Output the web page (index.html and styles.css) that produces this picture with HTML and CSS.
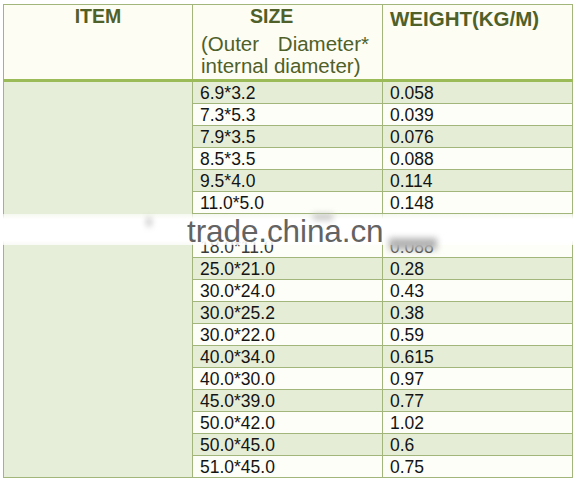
FILE: index.html
```html
<!DOCTYPE html>
<html>
<head>
<meta charset="utf-8">
<link rel="stylesheet" href="styles.css">
</head>
<body>
<div class="wrap">
<table class="spec">
  <colgroup>
    <col class="c1"><col class="c2"><col class="c3">
  </colgroup>
  <thead>
    <tr>
      <th class="h-item">ITEM</th>
      <th class="h-size"><div class="size-title">SIZE</div><div class="size-sub">(Outer Diameter* internal diameter)</div></th>
      <th class="h-weight">WEIGHT(KG/M)</th>
    </tr>
  </thead>
  <tbody>
    <tr class="g"><td class="item" rowspan="18"></td><td>6.9*3.2</td><td>0.058</td></tr>
    <tr class="w"><td>7.3*5.3</td><td>0.039</td></tr>
    <tr class="g"><td>7.9*3.5</td><td>0.076</td></tr>
    <tr class="w"><td>8.5*3.5</td><td>0.088</td></tr>
    <tr class="g"><td>9.5*4.0</td><td>0.114</td></tr>
    <tr class="w"><td>11.0*5.0</td><td>0.148</td></tr>
    <tr class="g"><td></td><td></td></tr>
    <tr class="w"><td class="cut">18.0*11.0</td><td class="cut">0.088</td></tr>
    <tr class="g"><td>25.0*21.0</td><td>0.28</td></tr>
    <tr class="w"><td>30.0*24.0</td><td>0.43</td></tr>
    <tr class="g"><td>30.0*25.2</td><td>0.38</td></tr>
    <tr class="w"><td>30.0*22.0</td><td>0.59</td></tr>
    <tr class="g"><td>40.0*34.0</td><td>0.615</td></tr>
    <tr class="w"><td>40.0*30.0</td><td>0.97</td></tr>
    <tr class="g"><td>45.0*39.0</td><td>0.77</td></tr>
    <tr class="w"><td>50.0*42.0</td><td>1.02</td></tr>
    <tr class="g"><td>50.0*45.0</td><td>0.6</td></tr>
    <tr class="w"><td>51.0*45.0</td><td>0.75</td></tr>
  </tbody>
</table>
<div class="watermark">
  <span class="blob b1"></span>
  <span class="blob b2"></span>
  <span class="wm-text">trade.china.cn</span>
</div>
<span class="blob b3"></span>
</div>
</body>
</html>
```
FILE: styles.css
```css
html, body {
  margin: 0;
  padding: 0;
  background: #ffffff;
}
body {
  padding: 4px 0 0 3px;
  font-family: "Liberation Sans", Arial, sans-serif;
}
.wrap {
  position: relative;
  width: 569px;
}
.spec {
  border-collapse: collapse;
  table-layout: fixed;
  width: 569px;
}
.c1 { width: 189px; }
.c2 { width: 190px; }
.c3 { width: 190px; }

.spec th, .spec td {
  border: 1px solid #a2b57a;
}
.spec th {
  background: #fdfdf3;
  color: #4f6029;
  vertical-align: top;
  border-bottom: 3px solid #9bbb59;
  height: 76px;
  padding: 0;
  font-size: 19.5px;
  font-weight: bold;
  line-height: 22px;
  box-sizing: border-box;
}
.h-item {
  text-align: center;
  padding-top: 0 !important;
}
.h-size {
  text-align: left;
  padding: 0 13px 0 8px !important;
}
.size-title {
  text-align: left;
  padding-left: 49px;
}
.size-sub {
  font-weight: normal;
  font-size: 20.5px;
  text-align: justify;
  margin-top: 6px;
  line-height: 22px;
}
.h-weight {
  text-align: left;
  padding: 3px 0 0 7px !important;
  font-size: 20.5px !important;
}
.spec td {
  font-size: 17.5px;
  color: #141414;
  height: 21px;
  padding: 0 0 0 7px;
  line-height: 20px;
  vertical-align: middle;
}
.spec tr.g td { background: #e5edd7; }
.spec tr.w td { background: #fefef8; }
.spec td.item { background: #e6eed9 !important; }
.spec td.cut { color: #3a3a3a; }

.watermark {
  position: absolute;
  left: -3px;
  top: 210px;
  width: 576px;
  height: 31px;
  background: linear-gradient(to bottom, rgba(255,255,255,0.6) 0%, #ffffff 16%, #ffffff 86%, rgba(255,255,255,0.75) 100%);
}
.wm-text {
  position: absolute;
  left: 187px;
  top: -1px;
  font-size: 31.5px;
  line-height: 36px;
  color: #636363;
  font-family: "Liberation Sans", Arial, sans-serif;
  letter-spacing: -0.1px;
}
.blob {
  position: absolute;
  background: #9a9a9a;
  filter: blur(3px);
}
.b1 { left: 147px; top: 4px; width: 4px; height: 8px; background: #b0b0b0; }
.b2 { left: 313px; top: 0px; width: 20px; height: 6px; background: #c4c4c4; }
.b3 { left: 386px; top: 234px; width: 48px; height: 12px; background: #b4b4b4; }
```
